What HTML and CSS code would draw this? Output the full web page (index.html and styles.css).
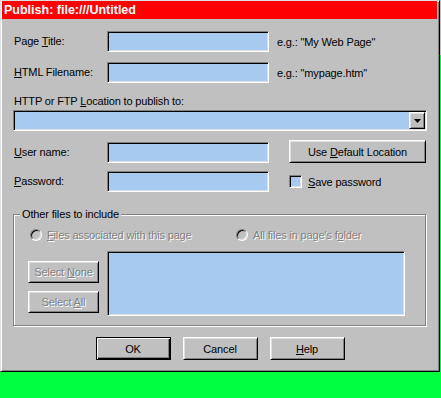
FILE: index.html
```html
<!doctype html>
<html>
  <head>
    <meta charset="utf-8">
    <title>Publish: file:///Untitled</title>
    <link rel="stylesheet" href="styles.css">
  </head>
  <body>
    <div class="window">
      <div class="titlebar">Publish: file:///Untitled</div>

      <form class="client">
        <div class="field">
          <label class="lbl">Page <u>T</u>itle:</label>
          <span class="text-box"></span>
          <span class="hint">e.g.: &quot;My Web Page&quot;</span>
        </div>

        <div class="field field-gap">
          <label class="lbl"><u>H</u>TML Filename:</label>
          <span class="text-box"></span>
          <span class="hint">e.g.: &quot;mypage.htm&quot;</span>
        </div>

        <label class="loc-label">HTTP or FTP <u>L</u>ocation to publish to:</label>
        <div class="combo sunken">
          <span class="drop-btn raised">
            <svg width="7" height="4" viewBox="0 0 7 4"><path d="M0 0h7L3.5 4z" fill="#000"/></svg>
          </span>
        </div>

        <div class="field field-user">
          <label class="lbl"><u>U</u>ser name:</label>
          <span class="text-box"></span>
          <button type="button" class="btn raised btn-wide">Use <u>D</u>efault Location</button>
        </div>

        <div class="field field-pass">
          <label class="lbl"><u>P</u>assword:</label>
          <span class="text-box"></span>
          <span class="check sunken"></span>
          <span class="check-text"><u>S</u>ave password</span>
        </div>

        <div class="group">
          <span class="group-title">Other files to include</span>
          <div class="radio-row">
            <span class="radio-opt radio-first"><span class="radio"></span><span class="disabled"><u>F</u>iles associated with this page</span></span>
            <span class="radio-opt"><span class="radio"></span><span class="disabled">All files in page's f<u>o</u>lder</span></span>
          </div>
          <div class="files">
            <div class="select-btns">
              <button type="button" class="btn raised btn-small disabled">Select <u>N</u>one</button>
              <button type="button" class="btn raised btn-small disabled">Select <u>A</u>ll</button>
            </div>
            <div class="file-list sunken"></div>
          </div>
        </div>

        <div class="actions">
          <button type="button" class="btn btn-default">OK</button>
          <button type="button" class="btn raised">Cancel</button>
          <button type="button" class="btn raised"><u>H</u>elp</button>
        </div>
      </form>
    </div>
  </body>
</html>
```
FILE: styles.css
```css
* {
  box-sizing: border-box;
}

html, body {
  margin: 0;
  height: 100%;
}

body {
  background: linear-gradient(#c0c0c0 0 55px, #00ff40 55px);
  font-family: "Liberation Sans", Arial, sans-serif;
  font-size: 11px;
  letter-spacing: -0.15px;
  color: #000;
}

u {
  text-decoration: underline;
  text-underline-offset: 1px;
}

.window {
  width: 440px;
  height: 372px;
  display: flex;
  flex-direction: column;
  background: #c0c0c0;
  border: 1px solid;
  border-color: #dfdfdf #000 #000 #dfdfdf;
  box-shadow: inset 1px 1px #fff, inset -1px -1px #808080;
  padding: 0 2px 1px 1px;
}

.titlebar {
  height: 18px;
  flex: 0 0 auto;
  background: #f00;
  color: #fff;
  font-weight: bold;
  font-size: 12.5px;
  letter-spacing: 0;
  line-height: 18px;
  padding-left: 2px;
}

.client {
  flex: 1 1 auto;
  display: flex;
  flex-direction: column;
  padding: 12px 10px 0 11px;
  margin: 0;
}

/* bevels */
.sunken {
  border: 1px solid;
  border-color: #808080 #fff #fff #808080;
  box-shadow: inset 1px 1px #000, inset -1px -1px #dfdfdf;
  background: #a6caf0;
}

.raised {
  border: 1px solid;
  border-color: #fff #000 #000 #fff;
  box-shadow: inset 1px 1px #dfdfdf, inset -1px -1px #808080;
  background: #c0c0c0;
}

.disabled {
  color: #808080;
  text-shadow: 1px 1px 0 #fff;
}

/* rows */
.field {
  display: flex;
  align-items: center;
  height: 21px;
}

.field-gap {
  margin-top: 10px;
}

.field-user {
  margin-top: 9px;
  height: 23px;
  align-items: flex-end;
}

.field-pass {
  margin-top: 8px;
}

.lbl {
  width: 94px;
  line-height: 21px;
  padding-left: 1px;
}

.text-box {
  width: 162px;
  height: 21px;
  border: 1px solid;
  border-color: #808080 #fff #fff #808080;
  box-shadow: inset 1px 1px #000, inset -1px -1px #dfdfdf;
  background: #a6caf0;
}

.hint {
  margin-left: 8px;
}

.loc-label {
  margin-top: 12px;
  line-height: 13px;
  padding-left: 1px;
}

.combo {
  margin-top: 2px;
  height: 21px;
  padding: 1px;
  display: flex;
  justify-content: flex-end;
}

.drop-btn {
  width: 16px;
  height: 17px;
  display: flex;
  align-items: center;
  justify-content: center;
}

.drop-btn svg {
  display: block;
}

/* buttons */
.btn {
  font: inherit;
  letter-spacing: inherit;
  color: #000;
  width: 75px;
  height: 23px;
  padding: 0;
  margin: 0;
  text-align: center;
}

.btn-wide {
  width: 137px;
  margin-left: 20px;
}

.btn-small {
  width: 71px;
  height: 22px;
  color: #808080;
}

.btn-default {
  background: #c0c0c0;
  border: 1px solid #000;
  box-shadow: inset 1px 1px #fff, inset -1px -1px #000, inset -2px -2px #808080;
}

/* checkbox */
.check {
  width: 13px;
  height: 13px;
  margin-left: 20px;
}

.check-text {
  margin-left: 6px;
}

/* group box */
.group {
  position: relative;
  margin-top: 22px;
  margin-right: 1px;
  height: 112px;
  border: 1px solid #808080;
  box-shadow: 1px 1px 0 #fff, inset 1px 1px 0 #fff;
  padding: 14px 0 0 14px;
}

.group-title {
  position: absolute;
  top: -7px;
  left: 6px;
  padding: 0 2px;
  line-height: 13px;
  background: #c0c0c0;
}

.radio-row {
  display: flex;
  align-items: center;
  height: 12px;
  padding-left: 2px;
}

.radio-opt {
  display: flex;
  align-items: center;
  gap: 5px;
}

.radio-first {
  width: 206px;
}

.radio {
  width: 12px;
  height: 12px;
  border-radius: 50%;
  border: 1px solid;
  border-color: #808080 #fff #fff #808080;
  box-shadow: inset 1px 1px #000, inset -1px -1px #dfdfdf;
  background: #c0c0c0;
}

.files {
  display: flex;
  margin-top: 10px;
}

.select-btns {
  display: flex;
  flex-direction: column;
  gap: 8px;
  padding-top: 10px;
}

.file-list {
  width: 298px;
  height: 65px;
  margin-left: 8px;
}

.actions {
  display: flex;
  justify-content: center;
  gap: 12px;
  margin-top: 11px;
}
```
